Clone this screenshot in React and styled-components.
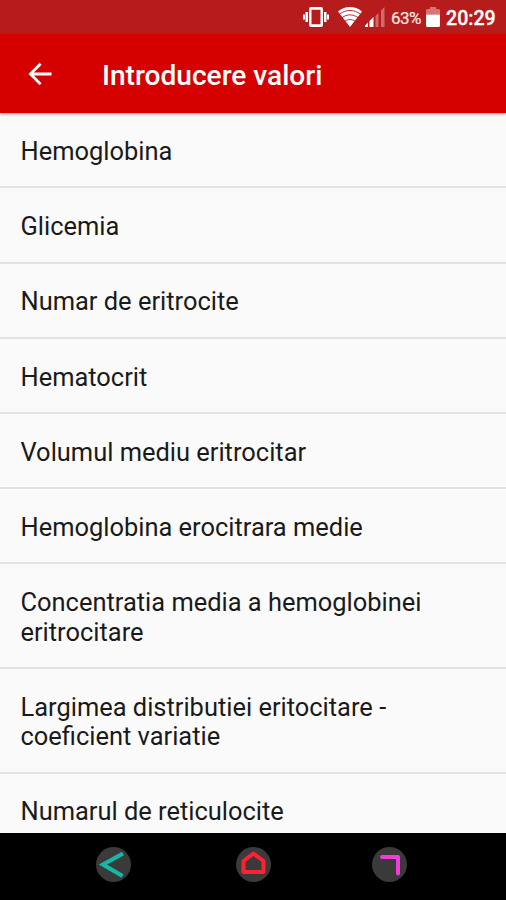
import React from 'react';
import styled, { createGlobalStyle } from 'styled-components';

const GlobalStyle = createGlobalStyle`
  * {
    box-sizing: border-box;
  }

  body {
    margin: 0;
    background-color: #fafafa;
    font-family: Roboto, sans-serif;
  }
`;

const Screen = styled.div`
  display: flex;
  flex-direction: column;
  height: 100vh;
  overflow: hidden;
`;

const StatusBar = styled.div`
  display: flex;
  flex-shrink: 0;
  align-items: center;
  justify-content: flex-end;
  height: 34px;
  padding-right: 11px;
  background-color: #b71c1c;
  color: #fff;
`;

const StatusIcon = styled.svg`
  flex-shrink: 0;
  margin-right: ${({ $gap }) => $gap}px;
`;

const BatteryText = styled.span`
  width: 31px;
  margin: 2px 4px 0 0;
  color: #fbe9e9;
  font-size: 17px;
  letter-spacing: -0.5px;
  white-space: nowrap;
  -webkit-text-stroke: 0.2px;
`;

const Clock = styled.span`
  width: 49px;
  margin-top: 3px;
  font-size: 19.6px;
  font-weight: 500;
  line-height: 24px;
  white-space: nowrap;
  -webkit-text-stroke: 0.3px;
`;

const AppBar = styled.header`
  display: flex;
  flex-shrink: 0;
  align-items: center;
  height: 79px;
  padding-left: 28px;
  background-color: #d50000;
  color: #fff;
  box-shadow: 0 1px 3px rgba(0, 0, 0, 0.4);
  z-index: 1;
`;

const BackButton = styled.button`
  display: flex;
  width: 74px;
  padding: 0;
  border: 0;
  background: none;
  color: inherit;
`;

const Title = styled.h1`
  margin: 4px 0 0;
  font-size: 28.1px;
  font-weight: 500;
  line-height: 34px;
`;

const List = styled.ul`
  flex: 1;
  min-height: 0;
  margin: 0;
  padding: 0.3px 0 0;
  overflow: hidden;
  list-style: none;
`;

const Item = styled.li`
  padding: 23.7px 80px 19.95px 20.5px;
  border-bottom: 2px solid #e3e3e3;
  color: #1a1a1a;
  font-size: 25.45px;
  line-height: 29.55px;
`;

const NavBar = styled.nav`
  display: flex;
  flex-shrink: 0;
  height: 67px;
  padding: 14px 0 0 95.5px;
  background-color: #000;
`;

const NavButton = styled.button`
  display: flex;
  flex-shrink: 0;
  align-items: center;
  justify-content: center;
  width: 35px;
  height: 35px;
  margin-right: ${({ $gap = 0 }) => $gap}px;
  padding: 0;
  border: 0;
  border-radius: 50%;
  background-color: #3a3a3a;
  color: ${({ $color }) => $color};
`;

const items = [
  'Hemoglobina',
  'Glicemia',
  'Numar de eritrocite',
  'Hematocrit',
  'Volumul mediu eritrocitar',
  'Hemoglobina erocitrara medie',
  'Concentratia media a hemoglobinei eritrocitare',
  'Largimea distributiei eritocitare - coeficient variatie',
  'Numarul de reticulocite',
];

const VibrateIcon = () => (
  <StatusIcon $gap={9} width="26" height="20" viewBox="0 0 26 20" fill="currentColor">
    <path
      fillRule="evenodd"
      d="M8 0h10a2 2 0 0 1 2 2v16a2 2 0 0 1-2 2H8a2 2 0 0 1-2-2V2a2 2 0 0 1 2-2zM8.500 2.800v14.400h9V2.800z"
    />
    <path d="M2.500 5h2.500v10H2.500zM0 7.500h2v5H0zM21 5h2.500v10H21zM24 7.500h2v5h-2z" />
  </StatusIcon>
);

const WifiIcon = () => (
  <StatusIcon $gap={3} width="24" height="20" viewBox="0 0 24 20">
    <path d="M0 4.500C7-1.400 17-1.400 24 4.500L12 20z" fill="currentColor" />
    <path
      d="M1.500 7.200c6.500-5 14.500-5 21 0M4 10.700c5-3.800 11-3.800 16 0M7 14.200c3-2.200 7-2.200 10 0"
      fill="none"
      stroke="#b71c1c"
      strokeWidth="0.900"
    />
  </StatusIcon>
);

const SignalIcon = () => (
  <StatusIcon $gap={6} width="20" height="20" viewBox="0 0 20 20" fill="currentColor">
    <path d="M0 20v-1.500l3-3V20zM4.500 20v-6L8.500 10v10z" />
    <path d="M10.500 20V9l3-3v14zM16 20V3.500L19.500 0v20z" opacity="0.350" />
  </StatusIcon>
);

const BatteryIcon = () => (
  <StatusIcon $gap={6} width="14" height="20" viewBox="0 0 14 20" fill="currentColor">
    <path d="M4 0h6v2h2.500A1.500 1.500 0 0 1 14 3.500V7.500H0V3.500A1.500 1.500 0 0 1 1.500 2H4z" opacity="0.400" />
    <path d="M0 7.500h14v11a1.500 1.500 0 0 1-1.500 1.500h-11A1.500 1.500 0 0 1 0 18.500z" />
  </StatusIcon>
);

const App = () => (
  <>
    <GlobalStyle />
    <Screen>
      <StatusBar>
        <VibrateIcon />
        <WifiIcon />
        <SignalIcon />
        <BatteryText>63%</BatteryText>
        <BatteryIcon />
        <Clock>20:29</Clock>
      </StatusBar>
      <AppBar>
        <BackButton aria-label="Inapoi">
          <svg width="24" height="24" viewBox="0 0 24 24" fill="none" stroke="currentColor" strokeWidth="2.800">
            <path d="M23.500 12H3M12.600 1.800L2.400 12l10.200 10.200" />
          </svg>
        </BackButton>
        <Title>Introducere valori</Title>
      </AppBar>
      <List>
        {items.map((item) => (
          <Item key={item}>{item}</Item>
        ))}
      </List>
      <NavBar>
        <NavButton $color="#14b8a6" $gap={105.5} aria-label="Inapoi">
          <svg width="35" height="35" viewBox="0 0 35 35" fill="none" stroke="currentColor" strokeWidth="4.200">
            <path d="M27 6.500L7 17.500L26.500 29" />
          </svg>
        </NavButton>
        <NavButton $color="#fb2236" $gap={100.5} aria-label="Acasa">
          <svg width="35" height="35" viewBox="0 0 35 35" fill="none" stroke="currentColor" strokeWidth="4" strokeLinejoin="round">
            <path d="M7.500 25V14L17.500 6.500l10 7.500v11z" />
          </svg>
        </NavButton>
        <NavButton $color="#f23bd8" aria-label="Recente">
          <svg width="35" height="35" viewBox="0 0 35 35" fill="none" stroke="currentColor" strokeWidth="4" strokeLinecap="round" strokeLinejoin="round">
            <path d="M10 10h16v16.500" />
          </svg>
        </NavButton>
      </NavBar>
    </Screen>
  </>
);

export default App;
